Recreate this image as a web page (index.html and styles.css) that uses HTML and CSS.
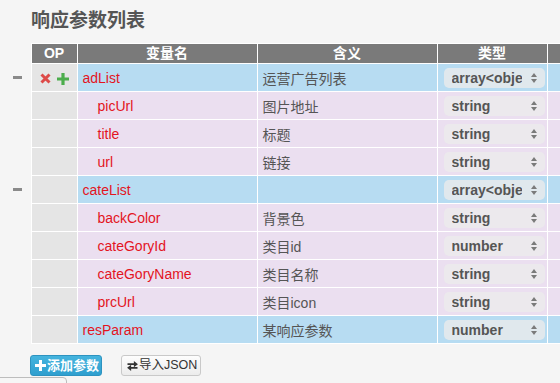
FILE: index.html
```html
<!DOCTYPE html>
<html>
<head>
<meta charset="utf-8">
<link rel="stylesheet" href="styles.css">
</head>
<body>
<h2 class="title">响应参数列表</h2>
<table class="params">
  <colgroup>
    <col class="c-gut"><col class="c-op"><col class="c-name"><col class="c-desc"><col class="c-type"><col class="c-extra">
  </colgroup>
  <thead>
    <tr><th class="gut"></th><th>OP</th><th>变量名</th><th>含义</th><th>类型</th><th></th></tr>
  </thead>
  <tbody>
    <tr class="obj">
      <td class="gut"><span class="minus"></span></td>
      <td class="op">
        <svg class="ico" width="11" height="11" viewBox="0 0 11 11"><path d="M1.5 1.5 L9.5 9.5 M9.5 1.5 L1.5 9.5" stroke="#dd4a48" stroke-width="3" stroke-linecap="butt"/></svg>
        <svg class="ico plus" width="12" height="12" viewBox="0 0 12 12"><path d="M6 0 V12 M0 6 H12" stroke="#4cad4c" stroke-width="3.2"/></svg>
      </td>
      <td class="name">adList</td><td class="desc">运营广告列表</td>
      <td class="type"><div class="sel"><span class="val">array&lt;object&gt;</span><span class="arr"></span></div></td><td></td>
    </tr>
    <tr class="sub"><td class="gut"></td><td class="op"></td><td class="name in">picUrl</td><td class="desc">图片地址</td><td class="type"><div class="sel"><span class="val">string</span><span class="arr"></span></div></td><td></td></tr>
    <tr class="sub"><td class="gut"></td><td class="op"></td><td class="name in">title</td><td class="desc">标题</td><td class="type"><div class="sel"><span class="val">string</span><span class="arr"></span></div></td><td></td></tr>
    <tr class="sub"><td class="gut"></td><td class="op"></td><td class="name in">url</td><td class="desc">链接</td><td class="type"><div class="sel"><span class="val">string</span><span class="arr"></span></div></td><td></td></tr>
    <tr class="obj"><td class="gut"><span class="minus"></span></td><td class="op"></td><td class="name">cateList</td><td class="desc"></td><td class="type"><div class="sel"><span class="val">array&lt;object&gt;</span><span class="arr"></span></div></td><td></td></tr>
    <tr class="sub"><td class="gut"></td><td class="op"></td><td class="name in">backColor</td><td class="desc">背景色</td><td class="type"><div class="sel"><span class="val">string</span><span class="arr"></span></div></td><td></td></tr>
    <tr class="sub"><td class="gut"></td><td class="op"></td><td class="name in">cateGoryId</td><td class="desc">类目id</td><td class="type"><div class="sel"><span class="val">number</span><span class="arr"></span></div></td><td></td></tr>
    <tr class="sub"><td class="gut"></td><td class="op"></td><td class="name in">cateGoryName</td><td class="desc">类目名称</td><td class="type"><div class="sel"><span class="val">string</span><span class="arr"></span></div></td><td></td></tr>
    <tr class="sub"><td class="gut"></td><td class="op"></td><td class="name in">prcUrl</td><td class="desc">类目icon</td><td class="type"><div class="sel"><span class="val">string</span><span class="arr"></span></div></td><td></td></tr>
    <tr class="obj"><td class="gut"></td><td class="op"></td><td class="name">resParam</td><td class="desc">某响应参数</td><td class="type"><div class="sel"><span class="val">number</span><span class="arr"></span></div></td><td></td></tr>
  </tbody>
</table>
<div class="actions">
  <button class="btn btn-add"><svg width="11" height="11" viewBox="0 0 11 11"><path d="M5.5 0 V11 M0 5.5 H11" stroke="#fff" stroke-width="3"/></svg><span>添加参数</span></button>
  <button class="btn btn-import"><svg width="11" height="10" viewBox="0 0 12 11"><path d="M0.5 3.5 H8.5" stroke="#333" stroke-width="2"/><path d="M7.5 0 L12 3.5 L7.5 7 Z" fill="#333"/><path d="M3.5 7.5 H11.5" stroke="#333" stroke-width="2"/><path d="M4.5 4 L0 7.5 L4.5 11 Z" fill="#333"/></svg><span>导入JSON</span></button>
</div>
<div class="tabstub"></div>
</body>
</html>
```
FILE: styles.css
```css
html, body {
  margin: 0;
  padding: 0;
}
body {
  background: #f5f5f5;
  font-family: "Liberation Sans", "Noto Sans CJK SC", sans-serif;
  overflow: hidden;
  width: 560px;
  height: 383px;
}
.title {
  margin: 0;
  padding: 9px 0 0 31px;
  font-size: 19px;
  line-height: 24px;
  font-weight: bold;
  color: #555;
}
.params {
  margin-top: 10px;
  border-collapse: collapse;
  table-layout: fixed;
  width: 647px;
}
.c-gut { width: 31px; }
.c-op { width: 46px; }
.c-name { width: 180px; }
.c-desc { width: 180px; }
.c-type { width: 110px; }
.c-extra { width: 100px; }
.params th, .params td {
  border: 1px solid #fff;
  padding: 0 5px;
  white-space: nowrap;
  overflow: hidden;
}
.params th {
  background: #7a7a7a;
  color: #fff;
  font-size: 14px;
  font-weight: bold;
  height: 19px;
  line-height: 19px;
  text-align: center;
}
.params td {
  height: 27px;
  font-size: 14px;
  color: #555;
}
.params .gut {
  border: none;
  background: transparent;
  padding: 0;
}
.minus {
  display: block;
  width: 9px;
  height: 3px;
  margin-left: 13px;
  background: #8a8a8a;
}
tr.obj td { background: #b7dcf2; }
tr.sub td { background: #ebdff0; }
.params td.op { background: #e5e5e5; padding: 0 0 0 8px; }
.params td.gut { background: transparent; }
.ico { vertical-align: middle; }
.ico.plus { margin-left: 3px; }
.params td.name { color: #e3141e; }
.params td.name.in { padding-left: 20px; }
.params td.type { padding: 0 0 0 6px; }
.sel {
  display: flex;
  align-items: center;
  width: 101px;
  height: 20px;
  border-radius: 5px;
  background: rgba(236, 236, 236, 0.78);
  box-sizing: border-box;
  padding-left: 8px;
}
.val {
  width: 70px;
  overflow: hidden;
  white-space: nowrap;
  font-weight: bold;
  color: #555;
  font-size: 14px;
}
.arr {
  margin-left: 9px;
  width: 7px;
  height: 10px;
  position: relative;
}
.arr::before, .arr::after {
  content: "";
  position: absolute;
  left: 0;
  border-left: 3.5px solid transparent;
  border-right: 3.5px solid transparent;
}
.arr::before { top: 0; border-bottom: 4px solid #7a7a7a; }
.arr::after { bottom: 0; border-top: 4px solid #7a7a7a; }
.actions {
  display: flex;
  gap: 19px;
  padding-left: 30px;
  margin-top: 11px;
}
.btn {
  height: 21px;
  box-sizing: border-box;
  border-radius: 3px;
  font-family: "Liberation Sans", "Noto Sans CJK SC", sans-serif;
  font-size: 13px;
  line-height: 19px;
  display: flex;
  align-items: center;
  padding: 0 3px;
  gap: 2px;
  white-space: nowrap;
  flex: none;
  overflow: hidden;
}
.btn svg { flex: none; }
.btn span { white-space: nowrap; flex: none; }
.btn-add {
  width: 72px;
  background: linear-gradient(#45b4de, #2f9fcf);
  border: 1px solid #2d93c0;
  color: #fff;
  font-weight: bold;
  padding-left: 4px;
  gap: 1px;
}
.btn-import {
  width: 80px;
  background: linear-gradient(#fdfdfd, #ececec);
  border: 1px solid #c9c9c9;
  color: #333;
  padding-left: 5px;
  gap: 1px;
  font-size: 12.5px;
}
.tabstub {
  margin-top: 1px;
  margin-left: -6px;
  width: 71px;
  height: 12px;
  border: 1px solid #bdbdbd;
  border-radius: 4px;
  background: #f6f6f6;
}
```
